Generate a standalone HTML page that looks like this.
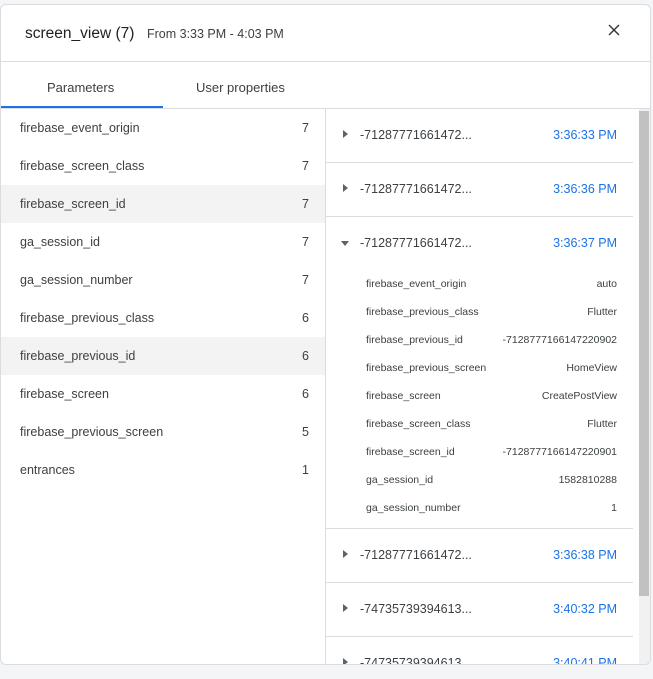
<!DOCTYPE html>
<html><head><style>
*{box-sizing:border-box;margin:0;padding:0}
body{width:653px;height:679px;background:#f4f5f7;font-family:"Liberation Sans",Arial,sans-serif;position:relative;overflow:hidden;color:#202124}
.card{position:absolute;left:0px;top:4px;width:651px;height:661px;background:#fff;border:1px solid #dadce0;border-radius:6px;overflow:hidden}
.abs{position:absolute}
.title{left:24px;top:20px;font-size:15.5px;color:#202124}
.sub{left:146px;top:22px;font-size:12.5px;color:#3c4043}
.hl{height:1px;background:#dadce0}
.tab{top:75px;font-size:13px;color:#3c4043}
.lrow{position:absolute;left:0;width:324px;height:38px;font-size:12.5px;color:#3c4043}
.lrow span{position:absolute;top:12px}
.rrow{position:absolute;left:325px;width:307px;font-size:12.5px}
.rrow .id{position:absolute;left:34px;top:19px;color:#3c4043}
.rrow .t{position:absolute;right:16px;top:19px;color:#1a73e8}
.tri{position:absolute;left:17px;top:21px;width:0;height:0;border-top:4px solid transparent;border-bottom:4px solid transparent;border-left:5px solid #5f6368}
.tri.d{left:15px;top:24px;border-left:4px solid transparent;border-right:4px solid transparent;border-top:5px solid #5f6368;border-bottom:0}
.kv{position:absolute;left:40px;right:16px;font-size:10.5px;color:#3c4043}
.kv b{font-weight:normal;position:absolute;right:0}
</style></head><body>
<div class="card">
<div class="abs title">screen_view (7)</div>
<div class="abs sub">From 3:33 PM - 4:03 PM</div>
<svg class="abs" style="left:607px;top:19px" width="12" height="12" viewBox="0 0 12 12"><path d="M1 1L11 11M11 1L1 11" stroke="#333" stroke-width="1.4"/></svg>
<div class="abs hl" style="left:0;right:0;top:56px"></div>
<div class="abs tab" style="left:46px">Parameters</div>
<div class="abs tab" style="left:195px">User properties</div>
<div class="abs" style="left:0;top:101px;width:162px;height:2px;background:#1a73e8"></div>
<div class="abs hl" style="left:0;right:0;top:103px"></div>
<div class="abs" style="left:324px;top:104px;width:1px;height:560px;background:#dadce0"></div>

<div class="lrow" style="top:104px"><span style="left:19px">firebase_event_origin</span><span style="right:16px">7</span></div>
<div class="lrow" style="top:142px"><span style="left:19px">firebase_screen_class</span><span style="right:16px">7</span></div>
<div class="lrow" style="top:180px;background:#f3f3f3"><span style="left:19px">firebase_screen_id</span><span style="right:16px">7</span></div>
<div class="lrow" style="top:218px"><span style="left:19px">ga_session_id</span><span style="right:16px">7</span></div>
<div class="lrow" style="top:256px"><span style="left:19px">ga_session_number</span><span style="right:16px">7</span></div>
<div class="lrow" style="top:294px"><span style="left:19px">firebase_previous_class</span><span style="right:16px">6</span></div>
<div class="lrow" style="top:332px;background:#f3f3f3"><span style="left:19px">firebase_previous_id</span><span style="right:16px">6</span></div>
<div class="lrow" style="top:370px"><span style="left:19px">firebase_screen</span><span style="right:16px">6</span></div>
<div class="lrow" style="top:408px"><span style="left:19px">firebase_previous_screen</span><span style="right:16px">5</span></div>
<div class="lrow" style="top:446px"><span style="left:19px">entrances</span><span style="right:16px">1</span></div>

<div class="rrow" style="top:104px;height:54px;border-bottom:1px solid #dadce0"><div class="tri"></div><span class="id">-71287771661472...</span><span class="t">3:36:33 PM</span></div>
<div class="rrow" style="top:158px;height:54px;border-bottom:1px solid #dadce0"><div class="tri"></div><span class="id">-71287771661472...</span><span class="t">3:36:36 PM</span></div>
<div class="rrow" style="top:212px;height:312px;border-bottom:1px solid #dadce0"><div class="tri d"></div><span class="id">-71287771661472...</span><span class="t">3:36:37 PM</span>
<div class="kv" style="top:61px">firebase_event_origin<b>auto</b></div>
<div class="kv" style="top:89px">firebase_previous_class<b>Flutter</b></div>
<div class="kv" style="top:117px">firebase_previous_id<b>-7128777166147220902</b></div>
<div class="kv" style="top:145px">firebase_previous_screen<b>HomeView</b></div>
<div class="kv" style="top:173px">firebase_screen<b>CreatePostView</b></div>
<div class="kv" style="top:201px">firebase_screen_class<b>Flutter</b></div>
<div class="kv" style="top:229px">firebase_screen_id<b>-7128777166147220901</b></div>
<div class="kv" style="top:257px">ga_session_id<b>1582810288</b></div>
<div class="kv" style="top:285px">ga_session_number<b>1</b></div>
</div>
<div class="rrow" style="top:524px;height:54px;border-bottom:1px solid #dadce0"><div class="tri"></div><span class="id">-71287771661472...</span><span class="t">3:36:38 PM</span></div>
<div class="rrow" style="top:578px;height:54px;border-bottom:1px solid #dadce0"><div class="tri"></div><span class="id">-74735739394613...</span><span class="t">3:40:32 PM</span></div>
<div class="rrow" style="top:632px;height:54px"><div class="tri"></div><span class="id">-74735739394613...</span><span class="t">3:40:41 PM</span></div>

<div class="abs" style="left:638px;top:104px;width:11px;height:557px;background:#f1f1f1"></div>
<div class="abs" style="left:638px;top:106px;width:10px;height:485px;background:#c1c1c1"></div>
</div>
</body></html>
